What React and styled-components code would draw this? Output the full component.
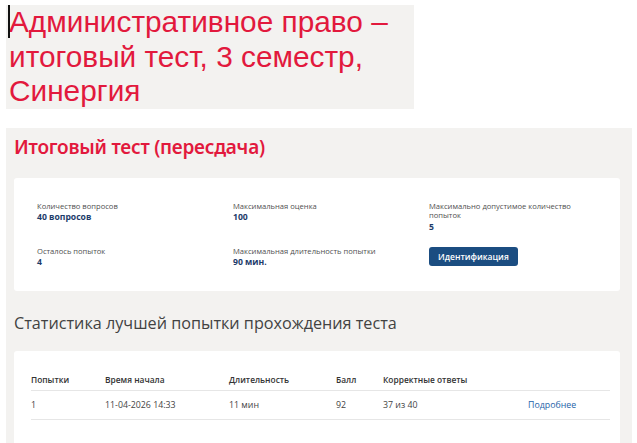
import React from 'react';
import styled, { createGlobalStyle } from 'styled-components';

const GlobalStyle = createGlobalStyle`
  body {
    margin: 0;
    background: #ffffff;
    font-family: "Open Sans", "Noto Sans", sans-serif;
  }
`

const Page = styled.div`
  width: 637px;
  height: 443px;
  overflow: hidden;
  padding-top: 5px;
  box-sizing: border-box;
`

const Banner = styled.div`
  position: relative;
  margin-left: 6px;
  width: 408px;
  padding-left: 3px;
  box-sizing: border-box;
  background: #f3f2f0;
  color: #e2193d;
  font-family: "Liberation Sans", Arial, sans-serif;
  font-size: 29.8px;
  line-height: 34.5px;
  &::before {
    content: "";
    position: absolute;
    left: 2px;
    top: 0;
    width: 2px;
    height: 33px;
    background: #111;
  }
`

const Panel = styled.div`
  margin-top: 19px;
  margin-left: 6px;
  width: 626px;
  min-height: 330px;
  padding: 8px 12px 0 8px;
  box-sizing: border-box;
  background: #f3f2f0;
`

const Title = styled.h1`
  margin: 0;
  font-family: "Noto Sans", "Open Sans", sans-serif;
  font-size: 19px;
  line-height: 22px;
  font-weight: 600;
  color: #e2193d;
  letter-spacing: -0.25px;
`

const Card = styled.div`
  margin-top: ${p => p.$top}px;
  background: #ffffff;
  border-radius: 3px;
  padding: ${p => p.$pad};
`

const InfoGrid = styled.div`
  display: grid;
  grid-template-columns: repeat(3, 196px);
  row-gap: 14px;
  align-items: start;
`

const Info = styled.div`
  width: 160px;
`

const Label = styled.div`
  font-size: 7.6px;
  line-height: 9.5px;
  color: #4f4f4f;
`

const Value = styled.div`
  margin-top: 1px;
  font-size: 8.6px;
  line-height: 11px;
  font-weight: 700;
  color: #1d3b6a;
`

const Button = styled.button`
  display: block;
  border: none;
  border-radius: 3px;
  background: #1b4d81;
  color: #ffffff;
  font-family: "Open Sans", sans-serif;
  font-size: 8.5px;
  font-weight: 600;
  height: 19px;
  padding: 0 9px;
  cursor: pointer;
`

const Subtitle = styled.h2`
  margin: 22px 0 0;
  font-family: "Open Sans", sans-serif;
  font-size: 16.2px;
  line-height: 20px;
  font-weight: 400;
  color: #424242;
`

const Table = styled.div`
  display: grid;
  grid-template-columns: 74px 124px 107px 47px 145px 1fr;
`

const Cell = styled.div`
  height: ${p => (p.$head ? 22 : 28)}px;
  display: flex;
  align-items: center;
  border-bottom: 1px solid #e6e6e6;
  font-size: ${p => (p.$head ? 8.4 : 8.8)}px;
  font-weight: ${p => (p.$head ? 600 : 400)};
  color: ${p => (p.$head ? '#333' : '#444')};
`

const Link = styled.a`
  color: #2563a8;
  text-decoration: none;
  cursor: pointer;
`

const info = [
  { label: 'Количество вопросов', value: '40 вопросов' },
  { label: 'Максимальная оценка', value: '100' },
  { label: 'Максимально допустимое количество попыток', value: '5' },
  { label: 'Осталось попыток', value: '4' },
  { label: 'Максимальная длительность попытки', value: '90 мин.' },
]

const heads = ['Попытки', 'Время начала', 'Длительность', 'Балл', 'Корректные ответы', '']
const row = ['1', '11-04-2026 14:33', '11 мин', '92', '37 из 40']

const App = () => {
  return (
    <Page>
      <GlobalStyle />
      <Banner>
        Административное право –<br />
        итоговый тест, 3 семестр,<br />
        Синергия
      </Banner>
      <Panel>
        <Title>Итоговый тест (пересдача)</Title>
        <Card $top={20} $pad="24px 23px 23px 23px">
          <InfoGrid>
            {info.map(item => (
              <Info key={item.label}>
                <Label>{item.label}</Label>
                <Value>{item.value}</Value>
              </Info>
            ))}
            <Info>
              <Button>Идентификация</Button>
            </Info>
          </InfoGrid>
        </Card>
        <Subtitle>Статистика лучшей попытки прохождения теста</Subtitle>
        <Card $top={18} $pad="17px 10px 40px 17px">
          <Table>
            {heads.map((h, i) => <Cell $head key={'h' + i}>{h}</Cell>)}
            {row.map((c, i) => <Cell key={'r' + i}>{c}</Cell>)}
            <Cell><Link>Подробнее</Link></Cell>
          </Table>
        </Card>
      </Panel>
    </Page>
  );
}

export default App;
